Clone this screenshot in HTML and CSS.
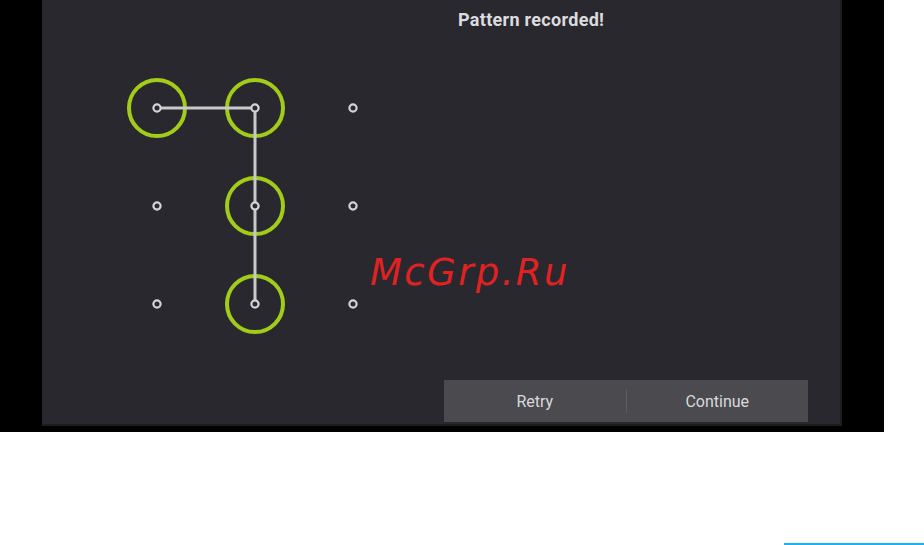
FILE: index.html
```html
<!DOCTYPE html>
<html>
<head>
<meta charset="utf-8">
<link rel="stylesheet" href="styles.css">
</head>
<body>
<div class="device">
  <div class="screen">
    <div class="pattern-area">
      <svg class="pattern" width="402" height="426" viewBox="0 0 402 426">
        <g fill="none" stroke="#a3cb1a" stroke-width="4">
          <circle cx="115" cy="108" r="28"/>
          <circle cx="213" cy="108" r="28"/>
          <circle cx="213" cy="206" r="28"/>
          <circle cx="213" cy="304" r="28"/>
        </g>
        <polyline points="115,108 213,108 213,304" fill="none" stroke="#c9c9cc" stroke-width="3" stroke-linejoin="miter"/>
        <g fill="#2a292f" stroke="#d4d4d6" stroke-width="2.2">
          <circle cx="115" cy="108" r="3.6"/>
          <circle cx="213" cy="108" r="3.6"/>
          <circle cx="311" cy="108" r="3.6"/>
          <circle cx="115" cy="206" r="3.6"/>
          <circle cx="213" cy="206" r="3.6"/>
          <circle cx="311" cy="206" r="3.6"/>
          <circle cx="115" cy="304" r="3.6"/>
          <circle cx="213" cy="304" r="3.6"/>
          <circle cx="311" cy="304" r="3.6"/>
        </g>
      </svg>
    </div>
    <div class="side">
      <div class="title">Pattern recorded!</div>
      <div class="buttons">
        <div class="btn">Retry</div>
        <div class="sep"></div>
        <div class="btn">Continue</div>
      </div>
    </div>
    <div class="watermark">McGrp.Ru</div>
  </div>
</div>
<div class="blue-line"></div>
</body>
</html>
```
FILE: styles.css
```css
html, body {
  margin: 0;
  padding: 0;
  background: #ffffff;
}
body {
  width: 924px;
  height: 545px;
  overflow: hidden;
  font-family: Roboto, "Liberation Sans", sans-serif;
}
.device {
  width: 884px;
  height: 432px;
  box-sizing: border-box;
  background: #000;
  padding: 0 42px 6px 42px;
}
.screen {
  position: relative;
  width: 800px;
  height: 426px;
  background: #29282e;
  display: flex;
  box-shadow: inset -2px -2px 0 #1d1d20;
}
.pattern-area {
  width: 402px;
  flex: none;
}
.pattern {
  display: block;
}
.side {
  flex: 1;
  display: flex;
  flex-direction: column;
  padding: 0 34px 4px 0;
}
.title {
  padding: 9px 0 0 14px;
  font-size: 18px;
  line-height: 22px;
  font-weight: 700;
  letter-spacing: 0.3px;
  color: #dcdcde;
  flex: 1;
}
.buttons {
  height: 42px;
  background: #4a4a4f;
  display: flex;
  align-items: center;
}
.btn {
  flex: 1;
  text-align: center;
  font-size: 16px;
  color: #dadadc;
}
.sep {
  width: 1px;
  height: 24px;
  background: #5c5c61;
}
.watermark {
  position: absolute;
  left: 328px;
  top: 248px;
  font-family: "DejaVu Sans", sans-serif;
  font-style: italic;
  font-size: 37px;
  letter-spacing: 2.4px;
  color: #e02222;
  line-height: 50px;
}
.blue-line {
  margin: 111px 0 0 784px;
  width: 140px;
  height: 2px;
  background: #1ab2f0;
}
```
